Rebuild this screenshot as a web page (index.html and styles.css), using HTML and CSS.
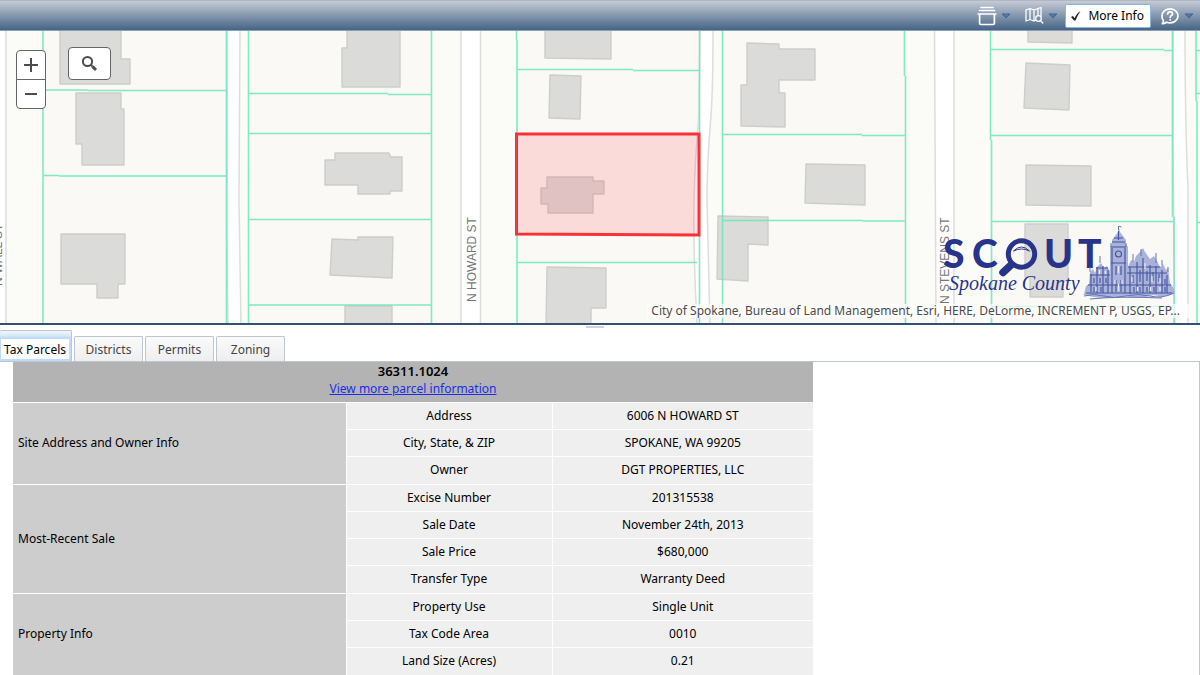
FILE: index.html
```html
<!DOCTYPE html>
<html lang="en">
<head>
<meta charset="utf-8">
<title>SCOUT - Spokane County</title>
<link rel="stylesheet" href="styles.css">
</head>
<body>
<header class="toolbar">
  <button class="tool" type="button" aria-label="Layers">
    <svg class="tool-icon" width="20" height="20" viewBox="0 0 20 20"><path d="M4 1.500h12M2.500 4.500h15M1.200 8h17.600M2.600 8v9.200q0 1.300 1.300 1.300h12.200q1.300 0 1.300-1.300V8"/></svg>
    <svg class="caret" width="10" height="6" viewBox="0 0 10 6"><path d="M1 1h8L5 5z"/></svg>
  </button>
  <button class="tool" type="button" aria-label="Map search">
    <svg class="tool-icon thin" width="20" height="20" viewBox="0 0 20 20"><path d="M2 4l4-1.500 4 1.500 4-1.500 3-1V10M2 4v11l4-1.500 4 1.500 1.500-.6M6 2.500v11M10 4v11M14 2.500V9"/><circle cx="14.500" cy="12.500" r="2.800"/><path d="M16.500 14.600l2.300 2.400"/></svg>
    <svg class="caret" width="10" height="6" viewBox="0 0 10 6"><path d="M1 1h8L5 5z"/></svg>
  </button>
  <button class="more-info" type="button" aria-pressed="true">
    <svg width="12" height="12" viewBox="0 0 12 12"><path d="M1 7l2-1 1.600 2.200C6 5 7.500 3 10.500 1 8.500 4 7 7 5.500 10.500H4z" fill="#222"/></svg>
    <span>More Info</span>
  </button>
  <button class="tool" type="button" aria-label="Help">
    <svg class="tool-icon" width="20" height="20" viewBox="0 0 20 20"><path d="M2.200 17.600c1-.8 1.300-1.900 1.200-3A7.300 6.900 0 0 1 2 9.900C2 5.900 5.600 2.800 10 2.800s8 3.100 8 7.100-3.600 7-8 7c-1.300 0-2.500-.2-3.500-.7-1.200.9-2.600 1.400-4.300 1.400z"/><path d="M7.700 8q.2-2.200 2.500-2.200T12.500 8q0 1.200-1.300 1.800-1 .6-1 1.400M10.200 13.700v.3"/></svg>
    <svg class="caret" width="10" height="6" viewBox="0 0 10 6"><path d="M1 1h8L5 5z"/></svg>
  </button>
</header>

<main class="workspace">
<section class="map" aria-label="Parcel map">
  <svg class="map-canvas" viewBox="0 31 1200 292" preserveAspectRatio="xMidYMid slice">
    <rect y="31" width="1200" height="292" fill="#fbfcf8"/>
    <g fill="#faf9f5">
      <path d="M43 31h183v292H43zM248 31h183v292H248zM517 31h182v292H517zM722 31h183v292H722zM991 31h182v292H991zM1197 31h3v292h-3z"/>
    </g>
    <g fill="#fff" stroke="#ddd" stroke-width="1.500">
      <path d="M-3 29H6V325H-3z"/>
      <path d="M227 29V230L228 325H241L239 200L240 29z"/>
      <path d="M461 29V325H480.500V29z"/>
      <path d="M700 29L699 115Q695 155 694 200T697 325H710L707 200Q707 165 711 115Q713 90 713 29z"/>
      <path d="M934.500 29L936 325H954V29z"/>
      <path d="M1173 29V150L1175 325H1188V190Q1185 120 1185 29z"/>
    </g>
    <g class="buildings">
      <path d="M60 29h61v30h9v25H60z"/>
      <path d="M76 93h45v16h3v56H82v-21h-6z"/>
      <path d="M61 234h64v50h-7v14H97v-14H61z"/>
      <path d="M347 29h53v58h-58V48h5z"/>
      <path d="M335 153h54l2 4h11v34h-12v3h-32v-9h-33v-25h10z"/>
      <path d="M332 239l26 1v-3h35l-1 41-62-3z"/>
      <path d="M345 306h47v20h-47z"/>
      <path d="M545 29h66v30l-66-1z"/>
      <path d="M550 75l31 1-1 43-31-1z"/>
      <path d="M547 177h46v4h11v13h-11v19h-45v-9h-7v-16h6z"/>
      <path d="M547 267l59 1v40h-15v18h-45z"/>
      <path d="M747 43l32 1v5h36v31h-36v13h6v34l-44-1V85h6z"/>
      <path d="M806 164l59 1v40l-60-2z"/>
      <path d="M718 216l50 1v28l-20-1v37l-31-2z"/>
      <path d="M1028 29h44v14l-44-1z"/>
      <path d="M1026 63l44 2-1 45-45-2z"/>
      <path d="M1026 165l65 1v40l-65-1z"/>
      <path d="M1025 224h43v57h-5v16h-33v-20h-5z"/>
    </g>
    <path class="parcel-lines" d="M43 31V323M226.500 31V323M43 90h45M88 90.500H226M43 175.500h16M59 176H226
      M248.500 31V323M431.500 31V323M248 93.500H388M388 94.500H431M248 133.500H431M248 219.500H431M248 305H431
      M516.500 31V40M517 40V323M699.500 31V323M517 69.500H633M633 70.500H699M517 262.500H697
      M722.500 31V323M904.500 31V76M905.500 76V323M722 134.500H862M862 135.500H905M722 220.500H863M863 221H905
      M990.500 31V140M991.500 140V323M1172.500 31V217M1174 217V323M991 49.500H1164M1164 50.500H1173M991 135.500H1173M991 221.500H1173M991 306.500H1173
      M1196 31V101M1197 101V323M1196 50.500h4M1196 93.500h4M1197 222.500h4"/>
    <g class="street-names">
      <text transform="translate(476 302) rotate(-90)">N HOWARD ST</text>
      <text transform="translate(949 304) rotate(-90)">N STEVENS ST</text>
      <text transform="translate(2 286) rotate(-90)">N WALL ST</text>
    </g>
    <path d="M516.500 134H699V235L516.500 234z" fill="#ff2830" fill-opacity=".14" stroke="#fa3237" stroke-width="3"/>
  </svg>

  <div class="zoom-control">
    <button type="button" aria-label="Zoom in"><svg width="16" height="16" viewBox="0 0 16 16"><path d="M1 8h14M8 1v14"/></svg></button>
    <button type="button" aria-label="Zoom out"><svg width="16" height="16" viewBox="0 0 16 16"><path d="M2 8h12"/></svg></button>
  </div>
  <button class="map-search" type="button" aria-label="Search">
    <svg width="17" height="17" viewBox="0 0 17 17"><circle cx="6.500" cy="6.500" r="4.600" stroke-width="2"/><path d="M10 10l1.500 1.500" stroke-width="2"/><path d="M11.500 11.500l3.500 3.500" stroke-width="3"/></svg>
  </button>

  <svg class="logo" width="240" height="76" viewBox="936 226 240 76" role="img" aria-label="SCOUT Spokane County">
    <g fill="#28348b">
      <text class="logo-name" y="268" x="943 972 1044 1078">SCUT</text>
      <text class="logo-county" x="949" y="290">Spokane County</text>
    </g>
    <g fill="none" stroke="#28348b">
      <circle cx="1021.500" cy="254" r="13.200" stroke-width="5"/>
      <path d="M1011 265l-8 7.500" stroke-width="7.500" stroke-linecap="round"/>
      <path d="M1013.500 251q8-8 16 0q-8-4-16 0" stroke-width="1"/>
    </g>
    <g class="court-body">
      <path d="M1084 294l2-8 3-2 1-12 3-3 2 4 2-6 4-4 3 5 3-2 3 5V247l2-3V240l6-8 1-4 1 4 6 8v4l2 3v20l3-7 3 2 2-6 4-4 3-4 2 4 5 7 4-3 3 5 3 6 3-3 3 6 2-2 2 15 4 6 1 4q-10 5-22 2-14 5-28 1-24 5-43-2z"/>
    </g>
    <g class="court-detail">
      <path d="M1111 247h15M1112 242h13M1111 263h15M1114 238h9M1090 275h20M1127 273h40M1088 285h83M1086 293h86M1096 268h12M1128 267h32"/>
      <path d="M1112 248v45M1125 248v45M1118.500 231v9M1091 274v18M1097 267v26M1103 266v27M1108 270v23M1130 267v27M1137 262v31M1143 258v35M1150 265v28M1156 266v27M1162 270v23M1167 275v18"/>
      <path d="M1094 278v5M1100 278v5M1106 278v5M1116 266v9M1121 266v9M1133 275v8M1140 270v12M1147 271v10M1153 272v9M1159 274v8M1165 279v5M1094 287v5M1101 287v5M1116 280v12M1121 280v12M1134 287v5M1140 287v5M1147 287v5M1154 287v5M1165 287v5"/>
      <circle cx="1118.500" cy="254" r="3"/>
    </g>
    <g class="court-light">
      <path d="M1099.500 270v4M1105.500 271v3M1118.500 266v7M1115 280v4M1122 280v4M1132 277v5M1145 263v6M1152 276v6M1160 278v5M1096 287v4M1137.500 287v4M1150.500 287v4M1160 287v4M1118.500 284v7"/>
    </g>
    <g class="court-edge">
      <path d="M1118.500 230v-4l3 1M1100 263v-7M1090 272v-5M1133 262v-8M1141 256v-7M1156 263v-10M1162 265v-5M1168 272v-5M1111 247v-4M1126 247v-4"/>
      <path d="M1084 296q10-3 20 0t22 0 24 0 24-3M1090 299q28-3 72-1"/>
    </g>
  </svg>

  <div class="attribution">City of Spokane, Bureau of Land Management, Esri, HERE, DeLorme, INCREMENT P, USGS, EP...</div>
</section>

<div class="splitter" role="separator"><span class="splitter-grip"></span></div>

<section class="details">
  <div class="tabs" role="tablist">
    <button class="tab active" type="button" role="tab" aria-selected="true"><span>Tax Parcels</span></button>
    <button class="tab" type="button" role="tab" aria-selected="false">Districts</button>
    <button class="tab" type="button" role="tab" aria-selected="false">Permits</button>
    <button class="tab" type="button" role="tab" aria-selected="false">Zoning</button>
  </div>
  <div class="panel" role="tabpanel">
    <table class="parcel">
      <colgroup><col class="col-group"><col class="col-field"><col class="col-value"></colgroup>
      <thead>
        <tr><th colspan="3"><div class="parcel-number">36311.1024</div><a href="#parcel">View more parcel information</a></th></tr>
      </thead>
      <tbody>
        <tr><th class="group" rowspan="3" scope="rowgroup">Site Address and Owner Info</th><td>Address</td><td>6006 N HOWARD ST</td></tr>
        <tr><td>City, State, &amp; ZIP</td><td>SPOKANE, WA 99205</td></tr>
        <tr><td>Owner</td><td>DGT PROPERTIES, LLC</td></tr>
      </tbody>
      <tbody>
        <tr><th class="group" rowspan="4" scope="rowgroup">Most-Recent Sale</th><td>Excise Number</td><td>201315538</td></tr>
        <tr><td>Sale Date</td><td>November 24th, 2013</td></tr>
        <tr><td>Sale Price</td><td>$680,000</td></tr>
        <tr><td>Transfer Type</td><td>Warranty Deed</td></tr>
      </tbody>
      <tbody>
        <tr><th class="group" rowspan="3" scope="rowgroup">Property Info</th><td>Property Use</td><td>Single Unit</td></tr>
        <tr><td>Tax Code Area</td><td>0010</td></tr>
        <tr><td>Land Size (Acres)</td><td>0.21</td></tr>
      </tbody>
    </table>
  </div>
</section>
</main>
</body>
</html>
```
FILE: styles.css
```css
* { box-sizing: border-box; }

body {
  margin: 0;
  height: 100vh;
  display: flex;
  flex-direction: column;
  overflow: hidden;
  background: #fff;
  color: #000;
  font: 12px/16px "Noto Sans", "Open Sans", sans-serif;
}

button {
  margin: 0;
  padding: 0;
  border: 0;
  background: none;
  color: inherit;
  font: inherit;
}

/* Toolbar */
.toolbar {
  display: flex;
  flex: none;
  justify-content: flex-end;
  align-items: center;
  height: 31px;
  padding: 0 6px 0 16px;
  border-top: 1px solid #b1b7be;
  border-bottom: 1px solid #8b9fbd;
  background: linear-gradient(#c4cbd6, #456486);
}
.tool {
  display: flex;
  align-items: center;
  gap: 4px;
  margin-right: 13px;
}
.tool:last-child { margin: 0 0 0 9px; }
.tool-icon {
  fill: none;
  stroke: #fff;
  stroke-width: 1.7;
  stroke-linecap: round;
  stroke-linejoin: round;
}
.tool-icon.thin { stroke-width: 1.3; }
.caret { fill: #527ba8; stroke: #3f6691; }
.more-info {
  display: flex;
  align-items: center;
  gap: 6px;
  height: 24px;
  margin-left: -6px;
  padding: 0 6px 0 4px;
  border: 1px solid #8eb4d8;
  border-radius: 2px;
  background: #fff;
}

/* Map */
.workspace {
  display: flex;
  flex: 1;
  flex-direction: column;
  min-height: 0;
}
.map {
  position: relative;
  flex: 0 0 292px;
  overflow: hidden;
}
.map-canvas {
  display: block;
  width: 100%;
  height: 100%;
}
.buildings path {
  fill: #dbdbda;
  stroke: #cdcdcb;
  stroke-width: 1.4;
  stroke-linejoin: round;
}
.parcel-lines {
  fill: none;
  stroke: #6be6bb;
  stroke-opacity: .85;
  stroke-width: 1.6;
}
.street-names {
  fill: #777;
  font: 12px "Liberation Sans", Arial, sans-serif;
}
.zoom-control {
  position: absolute;
  top: 19px;
  left: 16px;
  display: flex;
  flex-direction: column;
  width: 30px;
  border: 1px solid #666;
  border-radius: 4px;
  background: #fff;
}
.zoom-control button {
  display: grid;
  place-items: center;
  height: 28px;
}
.zoom-control button + button {
  height: 29px;
  border-top: 1px solid #666;
}
.zoom-control svg,
.map-search svg {
  fill: none;
  stroke: #4c4c4c;
  stroke-width: 2;
}
.map-search {
  position: absolute;
  top: 16px;
  left: 68px;
  display: grid;
  place-items: center;
  width: 43px;
  height: 33px;
  border: 1px solid #666;
  border-radius: 4px;
  background: #fff;
}
.logo {
  position: absolute;
  right: 24px;
  bottom: 21px;
}
.logo-name { font: 900 39px Lato, sans-serif; }
.logo-county { font: italic 20px "Liberation Serif", "Times New Roman", serif; }
.court-body { fill: #a9b2d8; }
.court-detail { fill: none; stroke: #4453a0; stroke-width: 1.1; }
.court-light { fill: none; stroke: #e6e9f4; stroke-width: 1.2; }
.court-edge { fill: none; stroke: #6673b3; stroke-width: 1; }
.attribution {
  position: absolute;
  right: 10px;
  bottom: 5px;
  max-width: 100%;
  padding: 0 10px 0 4px;
  overflow: hidden;
  background: rgba(255, 255, 255, .7);
  color: #4c4c4c;
  line-height: 14px;
  text-overflow: ellipsis;
  white-space: nowrap;
}

/* Splitter */
.splitter {
  display: flex;
  flex: none;
  justify-content: center;
  height: 5px;
  padding-right: 10px;
  border-top: 2px solid #36506d;
}
.splitter-grip {
  width: 18px;
  height: 2px;
  margin-top: 1px;
  background: #ccd2dc;
}

/* Details */
.details {
  display: flex;
  flex: 1;
  flex-direction: column;
  min-height: 0;
}
.tabs {
  display: flex;
  flex: none;
  align-items: flex-end;
  gap: 2px;
  height: 33px;
}
.tab {
  min-width: 69px;
  height: 25px;
  padding-top: 2px;
  border: 1px solid #bcc5d0;
  border-bottom: 0;
  border-radius: 2px 2px 0 0;
  background: linear-gradient(#fafafa, #eee);
  color: #444;
}
.tab.active {
  min-width: 72px;
  height: 31px;
  padding: 6px 0 0;
  border-left: 0;
  background: linear-gradient(#f4f7fb, #cfe1f6 6px, #fff 8px);
  color: #000;
}
.tab.active span {
  display: block;
  height: 24px;
  border: 2px solid #bfdcfb;
  border-left: 1px solid #bfdcfb;
  line-height: 21px;
}
.panel {
  flex: 1;
  min-height: 0;
  padding-left: 13px;
  overflow: hidden;
  border-top: 1px solid #bcc5d0;
  border-right: 1px solid #bcc5d0;
}
.parcel {
  width: 800px;
  max-width: 100%;
  border-collapse: collapse;
  table-layout: fixed;
}
.col-group { width: 333px; }
.col-field { width: 206px; }
.parcel th,
.parcel td {
  height: 27px;
  padding: 0;
  border-bottom: 1px solid #fff;
  text-align: center;
  font-weight: 400;
}
.parcel thead th {
  height: 40px;
  padding-bottom: 4px;
  background: #b3b3b3;
  line-height: 17px;
}
.parcel-number {
  font-size: 13px;
  font-weight: 600;
}
.parcel a { color: #1a2fe8; }
.parcel td {
  border-left: 1px solid #fff;
  background: #efefef;
}
.parcel tbody tr:last-child td { height: 28px; }
.parcel .group {
  padding-left: 5px;
  background: #cdcdcd;
  text-align: left;
}
```
